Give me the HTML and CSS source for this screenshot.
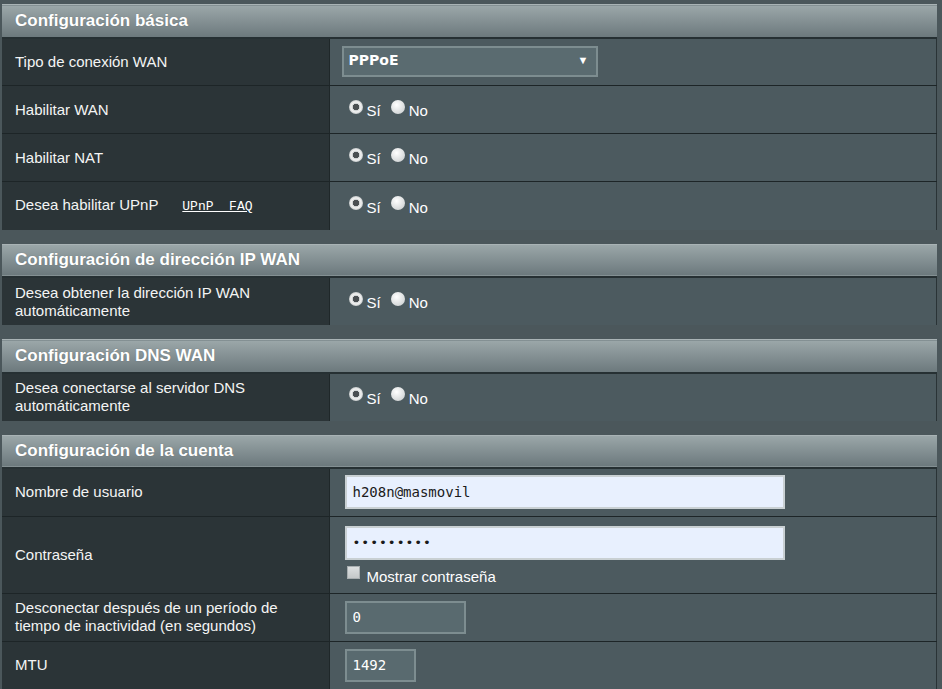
FILE: index.html
```html
<!DOCTYPE html>
<html lang="es">
<head>
<meta charset="utf-8">
<title>WAN</title>
<link rel="stylesheet" href="styles.css">
</head>
<body>
<div class="page">
  <table class="sect">
    <colgroup><col class="c1"><col class="c2"></colgroup>
    <thead><tr><th colspan="2" class="hdr">Configuración básica</th></tr></thead>
    <tbody>
      <tr><th>Tipo de conexión WAN</th><td><div class="sel"><select class="select"><option>PPPoE</option></select></div></td></tr>
      <tr><th>Habilitar WAN</th><td><label class="rad"><input type="radio" name="wan" checked>Sí</label><label class="rad"><input type="radio" name="wan">No</label></td></tr>
      <tr><th>Habilitar NAT</th><td><label class="rad"><input type="radio" name="nat" checked>Sí</label><label class="rad"><input type="radio" name="nat">No</label></td></tr>
      <tr><th>Desea habilitar UPnP <a class="faq" href="#">UPnP&nbsp;&nbsp;FAQ</a></th><td><label class="rad"><input type="radio" name="upnp" checked>Sí</label><label class="rad"><input type="radio" name="upnp">No</label></td></tr>
    </tbody>
  </table>

  <table class="sect">
    <colgroup><col class="c1"><col class="c2"></colgroup>
    <thead><tr><th colspan="2" class="hdr">Configuración de dirección IP WAN</th></tr></thead>
    <tbody>
      <tr><th>Desea obtener la dirección IP WAN automáticamente</th><td><label class="rad"><input type="radio" name="ip" checked>Sí</label><label class="rad"><input type="radio" name="ip">No</label></td></tr>
    </tbody>
  </table>

  <table class="sect">
    <colgroup><col class="c1"><col class="c2"></colgroup>
    <thead><tr><th colspan="2" class="hdr">Configuración DNS WAN</th></tr></thead>
    <tbody>
      <tr><th>Desea conectarse al servidor DNS automáticamente</th><td><label class="rad"><input type="radio" name="dns" checked>Sí</label><label class="rad"><input type="radio" name="dns">No</label></td></tr>
    </tbody>
  </table>

  <table class="sect">
    <colgroup><col class="c1"><col class="c2"></colgroup>
    <thead><tr><th colspan="2" class="hdr">Configuración de la cuenta</th></tr></thead>
    <tbody>
      <tr><th>Nombre de usuario</th><td><input class="light" type="text" value="h208n@masmovil"></td></tr>
      <tr class="tall"><th>Contraseña</th><td><input class="light pw" type="password" value="123456789"><label class="chk"><input type="checkbox">Mostrar contraseña</label></td></tr>
      <tr><th>Desconectar después de un período de tiempo de inactividad (en segundos)</th><td><input class="dark idle" type="text" value="0"></td></tr>
      <tr><th>MTU</th><td><input class="dark mtu" type="text" value="1492"></td></tr>
    </tbody>
  </table>
</div>
</body>
</html>
```

FILE: styles.css
```css
html, body {
  margin: 0;
  padding: 0;
  background: #4b575b;
  height: 100%;
  overflow: hidden;
}
.page {
  padding: 4px 5px 0 2px;
  font-family: "Liberation Sans", Arial, sans-serif;
  color: #ffffff;
}
.sect {
  width: 935px;
  border-collapse: collapse;
  table-layout: fixed;
  margin-bottom: 14px;
}
.c1 {
  width: 327px;
}
.hdr {
  height: 33px;
  box-sizing: border-box;
  padding: 0 0 0 13px;
  text-align: left;
  font-size: 17px;
  font-weight: bold;
  color: #ffffff;
  background: linear-gradient(#9ba7a9, #6b787c);
  border-top: 1px solid #a9b3b5;
  border-bottom: 2px solid #263033;
  text-shadow: 0 0 1px rgba(0,0,0,0.25);
}
.sect tbody tr {
  height: 48px;
}
.sect tbody tr.tall {
  height: 77px;
}
.sect tbody th {
  text-align: left;
  font-weight: normal;
  font-size: 15px;
  line-height: 18px;
  padding: 0 30px 0 13px;
  background: #2b3437;
  border-bottom: 1px solid #1d2527;
  color: #f4f4f4;
}
.sect tbody td {
  background: #4c5a5f;
  border-bottom: 1px solid #1d2527;
  border-left: 1px solid #1f2729;
  border-right: 1px solid #2a3336;
  padding: 0 0 0 14px;
  font-size: 15px;
}
.sect tbody tr.tall td {
  vertical-align: top;
  padding-top: 9px;
}
.sect tbody tr:last-child th,
.sect tbody tr:last-child td {
  border-bottom: none;
}
.faq {
  font-family: "Liberation Mono", "DejaVu Sans Mono", monospace;
  font-size: 13px;
  color: #ffffff;
  margin-left: 20px;
}
.sel {
  position: relative;
  display: inline-block;
  margin-left: -2px;
}
.sel::after {
  content: "▼";
  position: absolute;
  right: 9px;
  top: 8px;
  font-size: 11px;
  color: #ffffff;
  pointer-events: none;
}
.select {
  appearance: none;
  -webkit-appearance: none;
  width: 256px;
  height: 31px;
  background: #5a6b70;
  border: 2px solid #7d8d90;
  border-radius: 0;
  color: #ffffff;
  font-family: "DejaVu Sans", Verdana, sans-serif;
  font-size: 14px;
  font-weight: bold;
  letter-spacing: 0;
  padding: 0 0 3px 5px;
}
.rad {
  display: inline-flex;
  align-items: center;
  margin-right: 5px;
  color: #ffffff;
  font-size: 15px;
  position: relative;
  top: 2px;
}
.rad input {
  appearance: none;
  -webkit-appearance: none;
  width: 14px;
  height: 14px;
  border-radius: 50%;
  margin: 0 4px 0 5px;
  background: radial-gradient(circle at 40% 35%, #ffffff, #d6d9da 70%, #b8bcbe);
  position: relative;
  top: -4px;
}
.rad input:checked {
  background: radial-gradient(circle, #4a4f52 0 3px, #d0d3d4 3.5px, #f3f3f3 5px, #c5c9ca 7px);
}
.light {
  width: 440px;
  height: 34px;
  box-sizing: border-box;
  background: #e8f0fe;
  border: 2px solid #c9d0d3;
  font-family: "DejaVu Sans Mono", "Liberation Mono", monospace;
  font-size: 14px;
  color: #1a1a1a;
  padding: 0 6px;
  display: block;
  margin-left: 1px;
}
.pw {
  letter-spacing: 1px;
  font-size: 13px;
}
.chk {
  display: flex;
  align-items: center;
  font-size: 15px;
  color: #ffffff;
  margin-top: 8px;
  height: 18px;
}
.chk input {
  appearance: none;
  -webkit-appearance: none;
  width: 13px;
  height: 13px;
  margin: 0 7px 0 3px;
  background: linear-gradient(#dcdfe0, #c4c8c9);
  border: 1px solid #a8aeb0;
  box-sizing: border-box;
  position: relative;
  top: -4px;
}
.dark {
  height: 33px;
  box-sizing: border-box;
  background: #596a6f;
  border: 2px solid #7d8d90;
  color: #ffffff;
  font-family: "DejaVu Sans Mono", "Liberation Mono", monospace;
  font-size: 14px;
  padding: 0 6px;
  margin-left: 1px;
}
.idle {
  width: 121px;
}
.mtu {
  width: 71px;
}
```
